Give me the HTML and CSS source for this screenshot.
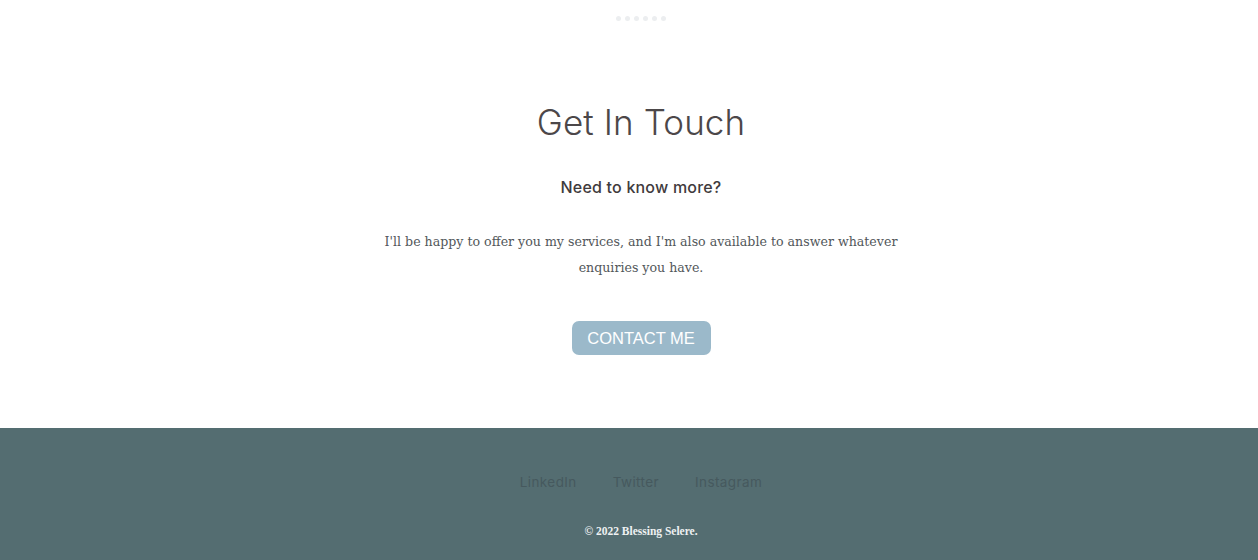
FILE: index.html
```html
<!DOCTYPE html>
<html lang="en">
<head>
<meta charset="utf-8">
<title>Get In Touch</title>
<link rel="stylesheet" href="styles.css">
</head>
<body>
<main class="contact">
  <div class="dots"><span></span><span></span><span></span><span></span><span></span><span></span></div>
  <h1 class="title">Get In Touch</h1>
  <h2 class="subtitle">Need to know more?</h2>
  <p class="text">I'll be happy to offer you my services, and I'm also available to answer whatever enquiries you have.</p>
  <a class="btn" href="#">CONTACT ME</a>
</main>
<footer class="footer">
  <nav class="links">
    <a href="#">LinkedIn</a>
    <a href="#">Twitter</a>
    <a href="#">Instagram</a>
  </nav>
  <p class="copy">© 2022 Blessing Selere.</p>
</footer>
</body>
</html>
```
FILE: styles.css
```css
* { box-sizing: border-box; }
html, body { margin: 0; padding: 0; }
body {
  width: 1258px;
  height: 560px;
  overflow: hidden;
  background: #ffffff;
  display: flex;
  flex-direction: column;
}
.contact {
  height: 428px;
  display: flex;
  flex-direction: column;
  align-items: center;
  padding-top: 16px;
  padding-left: 24px;
}
.dots {
  display: flex;
  gap: 4px;
  height: 6px;
}
.dots span {
  width: 5px;
  height: 5px;
  border-radius: 50%;
  background: #eceef0;
}
.title {
  margin: 78px 0 0;
  font-family: "Inter", "Lato", sans-serif;
  font-weight: 300;
  font-size: 35px;
  line-height: 44px;
  color: #4c4749;
  letter-spacing: 0.1px;
}
.subtitle {
  margin: 33px 0 0;
  font-family: "Inter", "Lato", sans-serif;
  font-weight: 500;
  font-size: 16px;
  line-height: 20px;
  color: #3f3b3d;
  letter-spacing: 0.2px;
}
.text {
  margin: 32px 0 0;
  width: 530px;
  text-align: center;
  font-family: "DejaVu Serif", serif;
  font-size: 12.6px;
  line-height: 26px;
  color: #52575a;
}
.btn {
  margin-top: 40px;
  width: 139px;
  height: 34px;
  display: flex;
  align-items: center;
  justify-content: center;
  background: #9bb9ca;
  border-radius: 7px;
  color: #ffffff;
  text-decoration: none;
  font-family: "Liberation Sans", Arial, sans-serif;
  font-size: 16.5px;
}
.footer {
  flex: 1;
  background: #546d71;
  display: flex;
  flex-direction: column;
  align-items: center;
  padding-top: 46px;
  padding-left: 24px;
}
.links {
  display: flex;
  gap: 36px;
}
.links a {
  font-family: "Inter", "Lato", sans-serif;
  font-size: 13.5px;
  line-height: 16px;
  letter-spacing: 0.4px;
  color: #46595e;
  text-decoration: none;
}
.copy {
  margin: 34px 0 0;
  font-family: "Liberation Serif", serif;
  font-weight: bold;
  font-size: 11.5px;
  line-height: 14px;
  color: #eef1f2;
}
```
